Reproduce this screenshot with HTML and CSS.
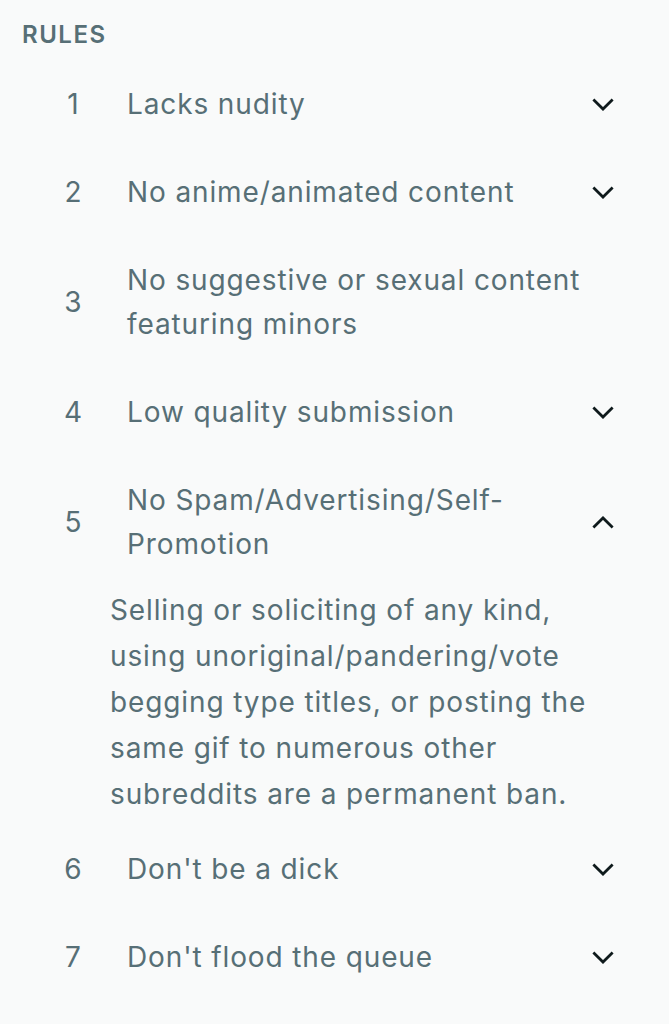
FILE: index.html
```html
<!DOCTYPE html>
<html lang="en">
<head>
<meta charset="utf-8">
<title>Rules</title>
<link rel="stylesheet" href="styles.css">
</head>
<body>
<section class="rules">
  <h2 class="rules-title">RULES</h2>
  <ol class="rule-list">
    <li class="rule">
      <div class="rule-head">
        <span class="rule-num">1</span>
        <span class="rule-text">Lacks nudity</span>
        <svg class="chev" viewBox="0 0 24 14" aria-hidden="true"><path d="M1.5 1.5 L12 12 L22.5 1.5"/></svg>
      </div>
    </li>
    <li class="rule">
      <div class="rule-head">
        <span class="rule-num">2</span>
        <span class="rule-text">No anime/animated content</span>
        <svg class="chev" viewBox="0 0 24 14" aria-hidden="true"><path d="M1.5 1.5 L12 12 L22.5 1.5"/></svg>
      </div>
    </li>
    <li class="rule">
      <div class="rule-head">
        <span class="rule-num">3</span>
        <span class="rule-text">No suggestive or sexual content featuring minors</span>
        <span class="chev-space"></span>
      </div>
    </li>
    <li class="rule">
      <div class="rule-head">
        <span class="rule-num">4</span>
        <span class="rule-text">Low quality submission</span>
        <svg class="chev" viewBox="0 0 24 14" aria-hidden="true"><path d="M1.5 1.5 L12 12 L22.5 1.5"/></svg>
      </div>
    </li>
    <li class="rule open">
      <div class="rule-head">
        <span class="rule-num">5</span>
        <span class="rule-text">No Spam/Advertising/Self-Promotion</span>
        <svg class="chev" viewBox="0 0 24 14" aria-hidden="true"><path d="M1.5 12.5 L12 2 L22.5 12.5"/></svg>
      </div>
      <p class="rule-desc">Selling or soliciting of any kind, using unoriginal/pandering/vote begging type titles, or posting the same gif to numerous other subreddits are a permanent ban.</p>
    </li>
    <li class="rule">
      <div class="rule-head">
        <span class="rule-num">6</span>
        <span class="rule-text">Don't be a dick</span>
        <svg class="chev" viewBox="0 0 24 14" aria-hidden="true"><path d="M1.5 1.5 L12 12 L22.5 1.5"/></svg>
      </div>
    </li>
    <li class="rule">
      <div class="rule-head">
        <span class="rule-num">7</span>
        <span class="rule-text">Don't flood the queue</span>
        <svg class="chev" viewBox="0 0 24 14" aria-hidden="true"><path d="M1.5 1.5 L12 12 L22.5 1.5"/></svg>
      </div>
    </li>
  </ol>
</section>
</body>
</html>
```
FILE: styles.css
```css
html, body {
  margin: 0;
  padding: 0;
  background: #f9fafa;
}
body {
  font-family: Inter, "Noto Sans", "Liberation Sans", sans-serif;
  color: #576f76;
}
.rules {
  width: 669px;
}
.rules-title {
  margin: 0;
  padding: 19px 22px 9px;
  font-size: 24px;
  line-height: 32px;
  font-weight: 600;
  letter-spacing: 1.5px;
  color: #576f76;
}
.rule-list {
  list-style: none;
  margin: 0;
  padding: 0;
}
.rule-head {
  display: flex;
  align-items: center;
  padding: 22px 0 22px 58px;
}
.rule-num {
  flex: 0 0 30px;
  text-align: center;
  font-size: 28px;
  line-height: 44px;
}
.rule-text {
  flex: 1;
  margin-left: 39px;
  font-size: 28px;
  line-height: 44px;
  letter-spacing: 0.88px;
}
.chev, .chev-space {
  flex: 0 0 22px;
  width: 22px;
  height: 13px;
  margin: 0 55px 0 7px;
}
.chev path {
  fill: none;
  stroke: #0f1a1c;
  stroke-width: 3;
  stroke-linecap: butt;
  stroke-linejoin: miter;
}
.rule-desc {
  margin: -1px 0 0;
  padding: 0 60px 8px 110px;
  font-size: 28px;
  line-height: 46px;
  letter-spacing: 0.88px;
}
```
